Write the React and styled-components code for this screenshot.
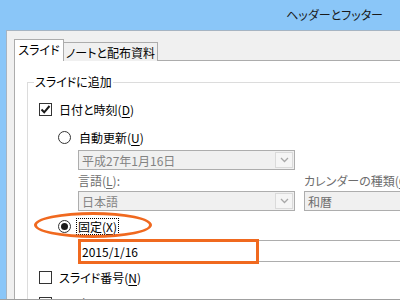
import React from 'react'
import styled, { createGlobalStyle } from 'styled-components'

const Global = createGlobalStyle`
  html, body {
    margin: 0;
    padding: 0;
  }
  body {
    font-family: "Noto Sans CJK JP", "Noto Sans", sans-serif;
    font-size: 12px;
    font-feature-settings: "palt";
    color: #000;
  }
  u {
    text-decoration-thickness: 1px;
    text-underline-offset: 2px;
  }
`

const Screen = styled.div`
  position: relative;
  width: 400px;
  height: 300px;
  box-sizing: border-box;
  overflow: hidden;
  background: #8ac6f8;
  border-bottom: 1px solid #a0a0a0;
  display: flex;
  flex-direction: column;
`

const TitleBar = styled.div`
  height: 30px;
  flex: none;
  display: flex;
  align-items: center;
  justify-content: flex-end;
  padding-right: 17px;
  color: #1a1a1a;
  line-height: 1;
`

const Client = styled.div`
  flex: 1;
  margin-left: 6px;
  margin-right: -30px;
  background: #f0f0f0;
  border-left: 1px solid #a6b4c2;
  border-top: 1px solid #a6b4c2;
  padding: 8px 0 0 7px;
  display: flex;
  flex-direction: column;
`

const TabStrip = styled.div`
  display: flex;
  align-items: flex-end;
  height: 22px;
  margin-bottom: -1px;
`

const Tab = styled.div`
  position: relative;
  z-index: ${p => (p.$active ? 1 : 0)};
  box-sizing: border-box;
  width: ${p => p.$w}px;
  height: ${p => (p.$active ? 22 : 19)}px;
  display: flex;
  align-items: center;
  justify-content: center;
  padding-bottom: ${p => (p.$active ? 2 : 0)}px;
  background: ${p => (p.$active ? '#fff' : '#f0f0f0')};
  border-top: 1px solid #acacac;
  border-right: 1px solid #acacac;
  border-left: ${p => (p.$active ? '1px solid #acacac' : 'none')};
`

const Panel = styled.div`
  flex: 1;
  background: #fff;
  border-top: 1px solid #acacac;
  border-left: 1px solid #acacac;
  padding: 21px 0 0 12px;
`

const Group = styled.div`
  position: relative;
  height: 100%;
  border-top: 1px solid #dcdcdc;
  border-left: 1px solid #dcdcdc;
  padding: 17px 0 0 11px;
`

const Legend = styled.span`
  position: absolute;
  top: -10px;
  left: 6px;
  padding: 0 1px;
  background: #fff;
  line-height: 18px;
`

const Row = styled.div`
  display: flex;
  align-items: center;
  height: 18px;
  gap: ${p => p.$gap || 7}px;
  margin-top: ${p => p.$mt || 0}px;
  margin-left: ${p => p.$ml || 0}px;
`

const CheckBox = styled.span`
  box-sizing: border-box;
  width: 13px;
  height: 13px;
  flex: none;
  border: 1px solid #333;
  background: #fff;
  display: flex;
  align-items: center;
  justify-content: center;
`

const Radio = styled.span`
  box-sizing: border-box;
  width: 13px;
  height: 13px;
  flex: none;
  border-radius: 50%;
  border: 1px solid #333;
  background: #fff;
  display: flex;
  align-items: center;
  justify-content: center;
  &::after {
    content: '';
    display: ${p => (p.$on ? 'block' : 'none')};
    width: 7px;
    height: 7px;
    border-radius: 50%;
    background: #1a1a1a;
  }
`

const Focus = styled.span`
  outline: 1px dotted #000;
  outline-offset: 0;
  padding: 0 1px;
  line-height: 15px;
`

const Columns = styled.div`
  display: flex;
  gap: 9px;
  margin-left: 39px;
`

const Column = styled.div`
  display: flex;
  flex-direction: column;
  width: ${p => (p.$w ? `${p.$w}px` : 'auto')};
  flex: ${p => (p.$w ? 'none' : 1)};
`

const Label = styled.div`
  height: 18px;
  line-height: 18px;
  margin-top: 2px;
  margin-bottom: 1px;
  color: #6d6d6d;
  white-space: nowrap;
`

const ComboBox = styled.div`
  box-sizing: border-box;
  display: flex;
  align-items: stretch;
  width: ${p => (p.$w ? `${p.$w}px` : 'auto')};
  height: 20px;
  margin-top: ${p => p.$mt || 0}px;
  margin-left: ${p => p.$ml || 0}px;
  background: #f0f0f0;
  border: 1px solid #adadad;
  color: ${p => (p.$dark ? '#6d6d6d' : '#838383')};
`

const ComboText = styled.span`
  flex: 1;
  display: flex;
  align-items: center;
  padding-left: 3px;
  white-space: nowrap;
`

const DropButton = styled.span`
  box-sizing: border-box;
  width: 18px;
  margin: 1px;
  border: 1px solid #dadada;
  background: #f5f5f5;
  display: flex;
  align-items: center;
  justify-content: center;
`

const TextBox = styled.div`
  box-sizing: border-box;
  height: 22px;
  margin: 5px 0 0 39px;
  border: 1px solid #adadad;
  display: flex;
  align-items: center;
  padding-left: 3px;
`

const Ellipse = styled.div`
  position: absolute;
  left: 34px;
  top: 212px;
  width: 118px;
  height: 26px;
  box-sizing: border-box;
  border: 3px solid #f0691f;
  border-radius: 50%;
`

const Highlight = styled.div`
  position: absolute;
  left: 78px;
  top: 239px;
  width: 181px;
  height: 25px;
  box-sizing: border-box;
  border: 3px solid #f0691f;
`

const Check = () => (
  <svg width="11" height="11" viewBox="0 0 11 11">
    <path d="M1.5 5.5 L4.2 8.3 L9.5 2" fill="none" stroke="#1a1a1a" strokeWidth="2" />
  </svg>
)

const Chevron = () => (
  <svg width="9" height="6" viewBox="0 0 9 6">
    <path d="M1 1 L4.5 4.5 L8 1" fill="none" stroke="#a8a8a8" strokeWidth="1.3" />
  </svg>
)

const Combo = ({ text, w, mt, ml, dark, noButton }) => (
  <ComboBox $w={w} $mt={mt} $ml={ml} $dark={dark}>
    <ComboText>{text}</ComboText>
    {!noButton && (
      <DropButton>
        <Chevron />
      </DropButton>
    )}
  </ComboBox>
)

export default function App() {
  return (
    <>
      <Global />
      <Screen>
        <TitleBar>ヘッダーとフッター</TitleBar>
        <Client>
          <TabStrip>
            <Tab $active $w={50}>スライド</Tab>
            <Tab $w={94}>ノートと配布資料</Tab>
          </TabStrip>
          <Panel>
            <Group>
              <Legend>スライドに追加</Legend>
              <Row>
                <CheckBox>
                  <Check />
                </CheckBox>
                <span>
                  日付と時刻(<u>D</u>)
                </span>
              </Row>
              <Row $mt={10} $ml={19} $gap={8}>
                <Radio />
                <span>
                  自動更新(<u>U</u>)
                </span>
              </Row>
              <Combo text="平成27年1月16日" w={217} mt={4} ml={39} />
              <Columns>
                <Column $w={217}>
                  <Label>
                    言語(<u>L</u>):
                  </Label>
                  <Combo text="日本語" w={217} />
                </Column>
                <Column>
                  <Label>
                    カレンダーの種類(<u>C</u>)
                  </Label>
                  <Combo text="和暦" dark noButton />
                </Column>
              </Columns>
              <Row $mt={6} $ml={19} $gap={6}>
                <Radio $on />
                <Focus>
                  固定(<u>X</u>)
                </Focus>
              </Row>
              <TextBox>2015/1/16</TextBox>
              <Row $mt={6}>
                <CheckBox />
                <span>
                  スライド番号(<u>N</u>)
                </span>
              </Row>
              <Row $mt={8}>
                <CheckBox />
                <span>
                  フッター(<u>F</u>)
                </span>
              </Row>
            </Group>
          </Panel>
        </Client>
        <Ellipse />
        <Highlight />
      </Screen>
    </>
  )
}
